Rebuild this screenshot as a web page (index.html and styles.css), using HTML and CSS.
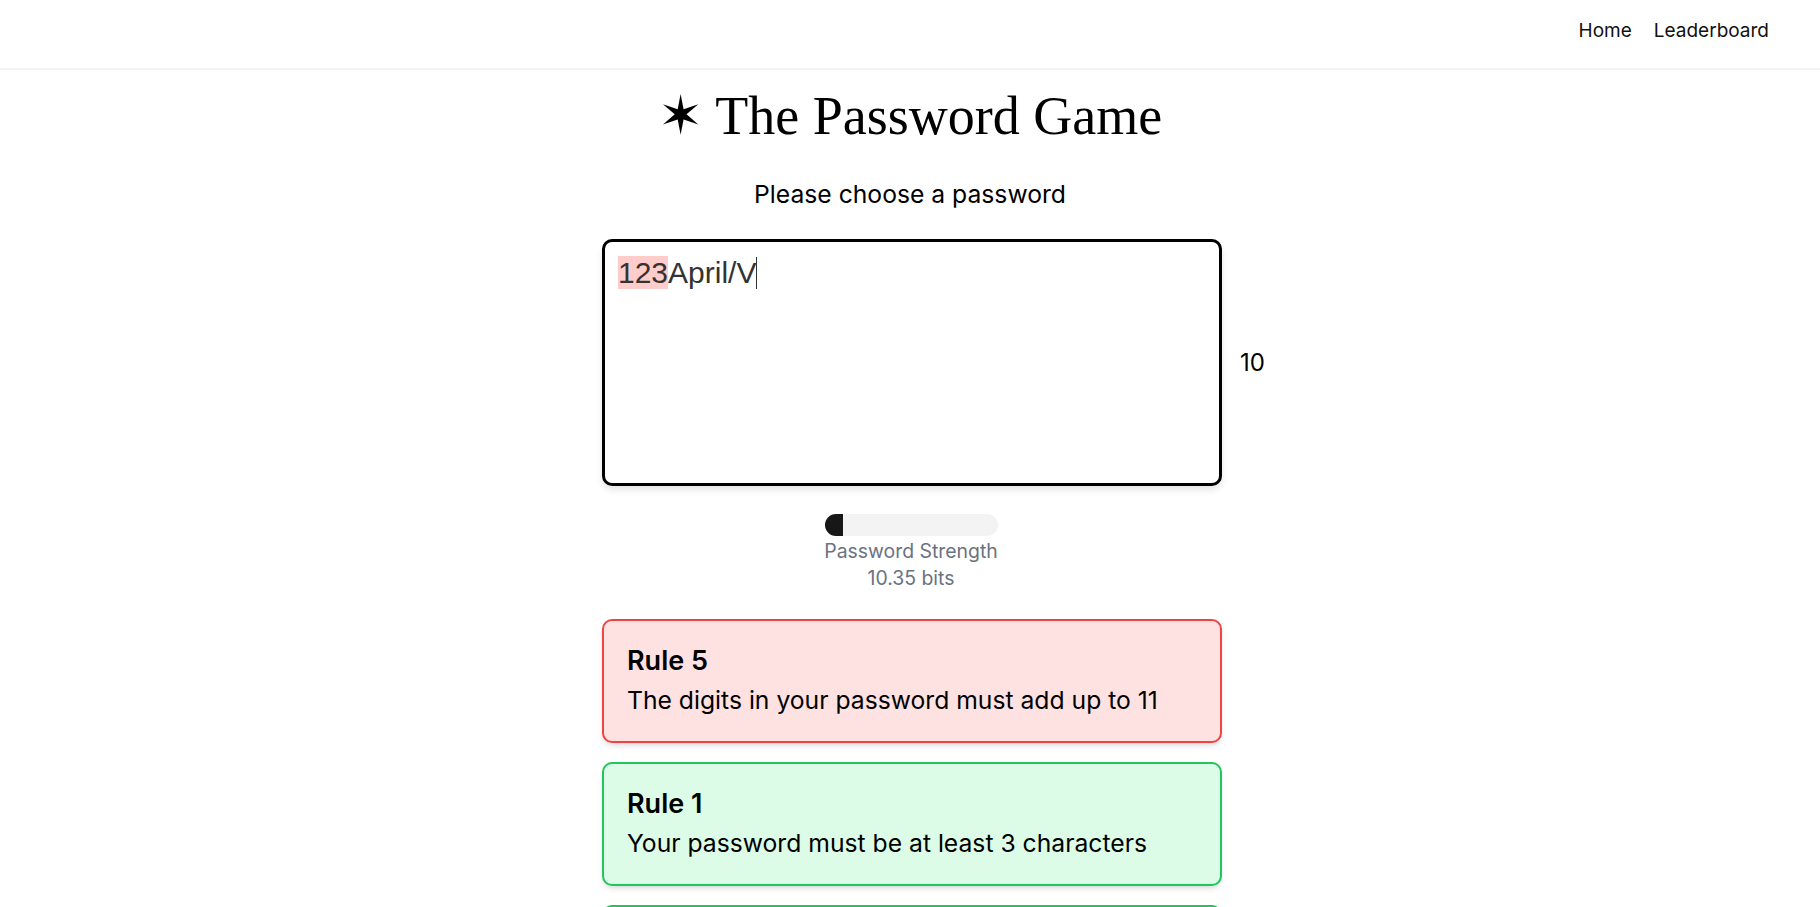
FILE: index.html
```html
<!DOCTYPE html>
<html lang="en">
<head>
<meta charset="utf-8">
<title>The Password Game</title>
<link rel="stylesheet" href="styles.css">
</head>
<body>
<header class="topbar">
  <nav class="nav">
    <a class="nav-link" href="#">Home</a>
    <a class="nav-link" href="#">Leaderboard</a>
  </nav>
</header>
<main class="main">
  <h1 class="title">✶ The Password Game</h1>
  <p class="prompt">Please choose a password</p>
  <div class="input-row">
    <div class="password-box"><span class="hl">123</span>April/V<span class="caret"></span></div>
    <div class="count">10</div>
  </div>
  <div class="strength">
    <div class="bar"><div class="bar-fill" style="width:18px"></div></div>
    <div class="strength-label">Password Strength</div>
    <div class="strength-label">10.35 bits</div>
  </div>
  <section class="rules">
    <div class="rule rule-fail">
      <div class="rule-title">Rule 5</div>
      <div class="rule-text">The digits in your password must add up to 11</div>
    </div>
    <div class="rule rule-pass">
      <div class="rule-title">Rule 1</div>
      <div class="rule-text">Your password must be at least 3 characters</div>
    </div>
    <div class="rule rule-pass">
      <div class="rule-title">Rule 2</div>
      <div class="rule-text">Your password must include a number.</div>
    </div>
  </section>
</main>
</body>
</html>
```
FILE: styles.css
```css
* { box-sizing: border-box; }
html, body { margin: 0; padding: 0; }
body {
  font-family: Inter, "Noto Sans", sans-serif;
  color: #000;
  background: #fff;
}
.topbar {
  height: 70px;
  border-bottom: 2px solid #f3f3f3;
  display: flex;
  align-items: center;
  justify-content: flex-end;
  padding-right: 51px;
  padding-bottom: 8px;
}
.nav { display: flex; gap: 22px; }
.nav-link {
  color: #111;
  text-decoration: none;
  font-size: 19px;
}
.main {
  display: flex;
  flex-direction: column;
  align-items: center;
  padding-top: 6px;
}
.title {
  margin: 0;
  font-family: "Liberation Serif", "DejaVu Serif", serif;
  font-weight: 400;
  font-size: 54px;
  line-height: 80px;
}
.prompt {
  margin: 0;
  margin-top: 23px;
  font-size: 24.7px;
  line-height: 30px;
}
.input-row {
  margin-top: 30px;
  display: grid;
  grid-template-columns: 1fr 620px 1fr;
  width: 100%;
  padding-left: 4px;
  align-items: center;
}
.password-box {
  grid-column: 2;
  height: 247px;
  border: 3px solid #000;
  border-radius: 10px;
  padding: 14px 13px;
  font-family: "Liberation Sans", Arial, sans-serif;
  font-size: 30px;
  line-height: 34px;
  color: #333;
  box-shadow: 0 4px 6px rgba(0,0,0,0.1);
}
.hl { background: #ffcccc; }
.caret {
  display: inline-block;
  width: 1px;
  height: 32px;
  background: #333;
  vertical-align: -6px;
}
.count {
  grid-column: 3;
  padding-left: 18px;
  font-size: 24px;
}
.strength {
  margin-top: 28px;
  display: flex;
  flex-direction: column;
  align-items: center;
}
.bar {
  width: 173px;
  height: 22px;
  border-radius: 11px;
  background: #f3f3f3;
  overflow: hidden;
  margin-left: 3px;
  margin-bottom: 2px;
}
.bar-fill { height: 100%; background: #171717; }
.strength-label {
  color: #6b7280;
  font-size: 19.4px;
  line-height: 27px;
  margin-left: 2px;
}
.rules {
  margin-top: 27px;
  width: 620px;
  margin-left: 4px;
  display: flex;
  flex-direction: column;
  gap: 19px;
}
.rule {
  height: 124px;
  border: 2px solid;
  border-radius: 10px;
  padding: 22px 23px 20px;
  box-shadow: 0 4px 6px -1px rgba(0,0,0,0.1), 0 2px 4px -2px rgba(0,0,0,0.1);
}
.rule-fail { background: #fee2e2; border-color: #ef4444; }
.rule-pass { background: #dcfce7; border-color: #22c55e; }
.rule-title {
  font-weight: 600;
  font-size: 27px;
  line-height: 36px;
}
.rule-text {
  font-size: 24.7px;
  line-height: 42px;
}
```
